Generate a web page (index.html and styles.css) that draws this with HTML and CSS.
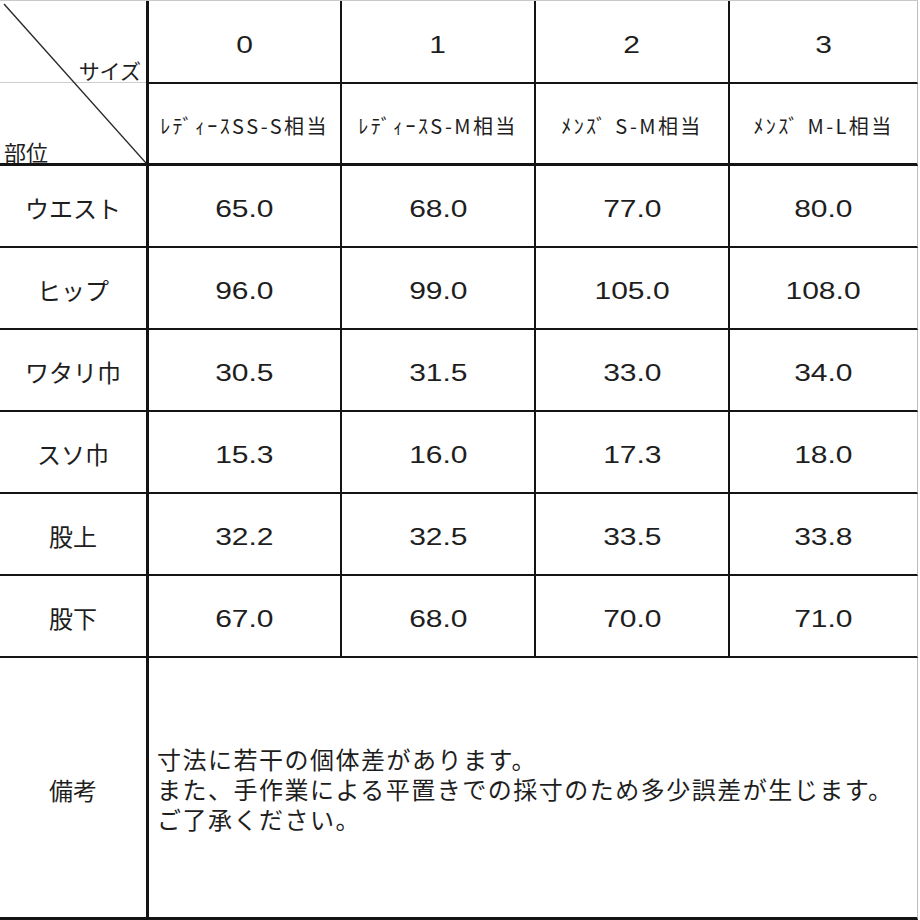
FILE: index.html
```html
<!DOCTYPE html>
<html lang="ja">
<head>
<meta charset="utf-8">
<link rel="stylesheet" href="styles.css">
</head>
<body>
<div class="sheet">
  <div class="cell corner">
    <div class="corner-top"><span>サイズ</span></div>
    <div class="corner-bottom"><span>部位</span></div>
    <svg class="diag" viewBox="0 0 146 162" preserveAspectRatio="none"><line x1="4" y1="3" x2="146" y2="162"/></svg>
  </div>
  <div class="cell hd"><span class="n">0</span></div>
  <div class="cell hd"><span class="n">1</span></div>
  <div class="cell hd"><span class="n">2</span></div>
  <div class="cell hd last"><span class="n">3</span></div>

  <div class="cell sub"><span class="s">ﾚﾃﾞｨｰｽSS-S相当</span></div>
  <div class="cell sub"><span class="s">ﾚﾃﾞｨｰｽS-M相当</span></div>
  <div class="cell sub"><span class="s">ﾒﾝｽﾞ S-M相当</span></div>
  <div class="cell sub last"><span class="s">ﾒﾝｽﾞ M-L相当</span></div>

  <div class="cell lbl">ウエスト</div>
  <div class="cell data"><span class="n">65.0</span></div>
  <div class="cell data"><span class="n">68.0</span></div>
  <div class="cell data"><span class="n">77.0</span></div>
  <div class="cell data last"><span class="n">80.0</span></div>

  <div class="cell lbl">ヒップ</div>
  <div class="cell data"><span class="n">96.0</span></div>
  <div class="cell data"><span class="n">99.0</span></div>
  <div class="cell data"><span class="n">105.0</span></div>
  <div class="cell data last"><span class="n">108.0</span></div>

  <div class="cell lbl">ワタリ巾</div>
  <div class="cell data"><span class="n">30.5</span></div>
  <div class="cell data"><span class="n">31.5</span></div>
  <div class="cell data"><span class="n">33.0</span></div>
  <div class="cell data last"><span class="n">34.0</span></div>

  <div class="cell lbl">スソ巾</div>
  <div class="cell data"><span class="n">15.3</span></div>
  <div class="cell data"><span class="n">16.0</span></div>
  <div class="cell data"><span class="n">17.3</span></div>
  <div class="cell data last"><span class="n">18.0</span></div>

  <div class="cell lbl">股上</div>
  <div class="cell data"><span class="n">32.2</span></div>
  <div class="cell data"><span class="n">32.5</span></div>
  <div class="cell data"><span class="n">33.5</span></div>
  <div class="cell data last"><span class="n">33.8</span></div>

  <div class="cell lbl">股下</div>
  <div class="cell data"><span class="n">67.0</span></div>
  <div class="cell data"><span class="n">68.0</span></div>
  <div class="cell data"><span class="n">70.0</span></div>
  <div class="cell data last"><span class="n">71.0</span></div>

  <div class="cell lbl bottom">備考</div>
  <div class="cell note bottom last">
    <p>寸法に若干の個体差があります。<br>また、手作業による平置きでの採寸のため多少誤差が生じます。<br>ご了承ください。</p>
  </div>
</div>
</body>
</html>
```

FILE: styles.css
```css
html, body {
  margin: 0;
  padding: 0;
  background: #ffffff;
}

.sheet {
  width: 918px;
  display: grid;
  grid-template-columns: 149px 193px 194px 194px 188px;
  grid-template-rows: 83px 82px repeat(6, 82px) 262px;
  border-top: 1px solid #c9c9c9;
  font-family: "Noto Sans CJK JP", "Liberation Sans", sans-serif;
  color: #1e1e1e;
}

.cell {
  box-sizing: border-box;
  border-right: 2px solid #141414;
  border-bottom: 2px solid #141414;
  display: flex;
  align-items: center;
  justify-content: center;
  overflow: hidden;
}

.cell.last {
  border-right: 1px solid #bdbdbd;
}

.corner {
  grid-row: 1 / span 2;
  border-right-width: 3px;
  border-bottom-width: 3px;
  position: relative;
  display: grid;
  grid-template-rows: 82px 1fr;
  align-items: stretch;
  justify-content: stretch;
}

.corner-top {
  border-bottom: 1px solid #cfcfcf;
  display: flex;
  align-items: flex-end;
  justify-content: flex-end;
  padding-right: 5px;
  font-size: 21px;
  line-height: 1;
}

.corner-top span {
  padding-bottom: 1px;
}

.corner-bottom {
  display: flex;
  align-items: flex-end;
  justify-content: flex-start;
  padding-left: 4px;
  padding-bottom: 1px;
  font-size: 22px;
  line-height: 1;
}

.diag {
  position: absolute;
  left: 0;
  top: 0;
  width: 146px;
  height: 162px;
}

.diag line {
  stroke: #2a2a2a;
  stroke-width: 1.4;
}

.hd {
  padding-top: 7px;
}

.sub {
  border-bottom-width: 3px;
  padding-top: 4px;
}

.s {
  font-size: 20px;
  letter-spacing: 2.4px;
  line-height: 1;
  white-space: nowrap;
}

.lbl {
  border-right-width: 3px;
  font-size: 24px;
  padding-top: 3px;
}

.data {
  padding-top: 5px;
}

.n {
  display: inline-block;
  font-family: "Liberation Sans", sans-serif;
  font-size: 24px;
  line-height: 1;
  transform: scaleX(1.25);
}

.bottom {
  border-bottom-width: 3px;
}

.note {
  grid-column: 2 / span 4;
  justify-content: flex-start;
  padding-left: 8px;
  padding-top: 2px;
}

.note p {
  margin: 0;
  font-size: 24px;
  line-height: 30px;
  letter-spacing: 1.5px;
  white-space: nowrap;
}
```
